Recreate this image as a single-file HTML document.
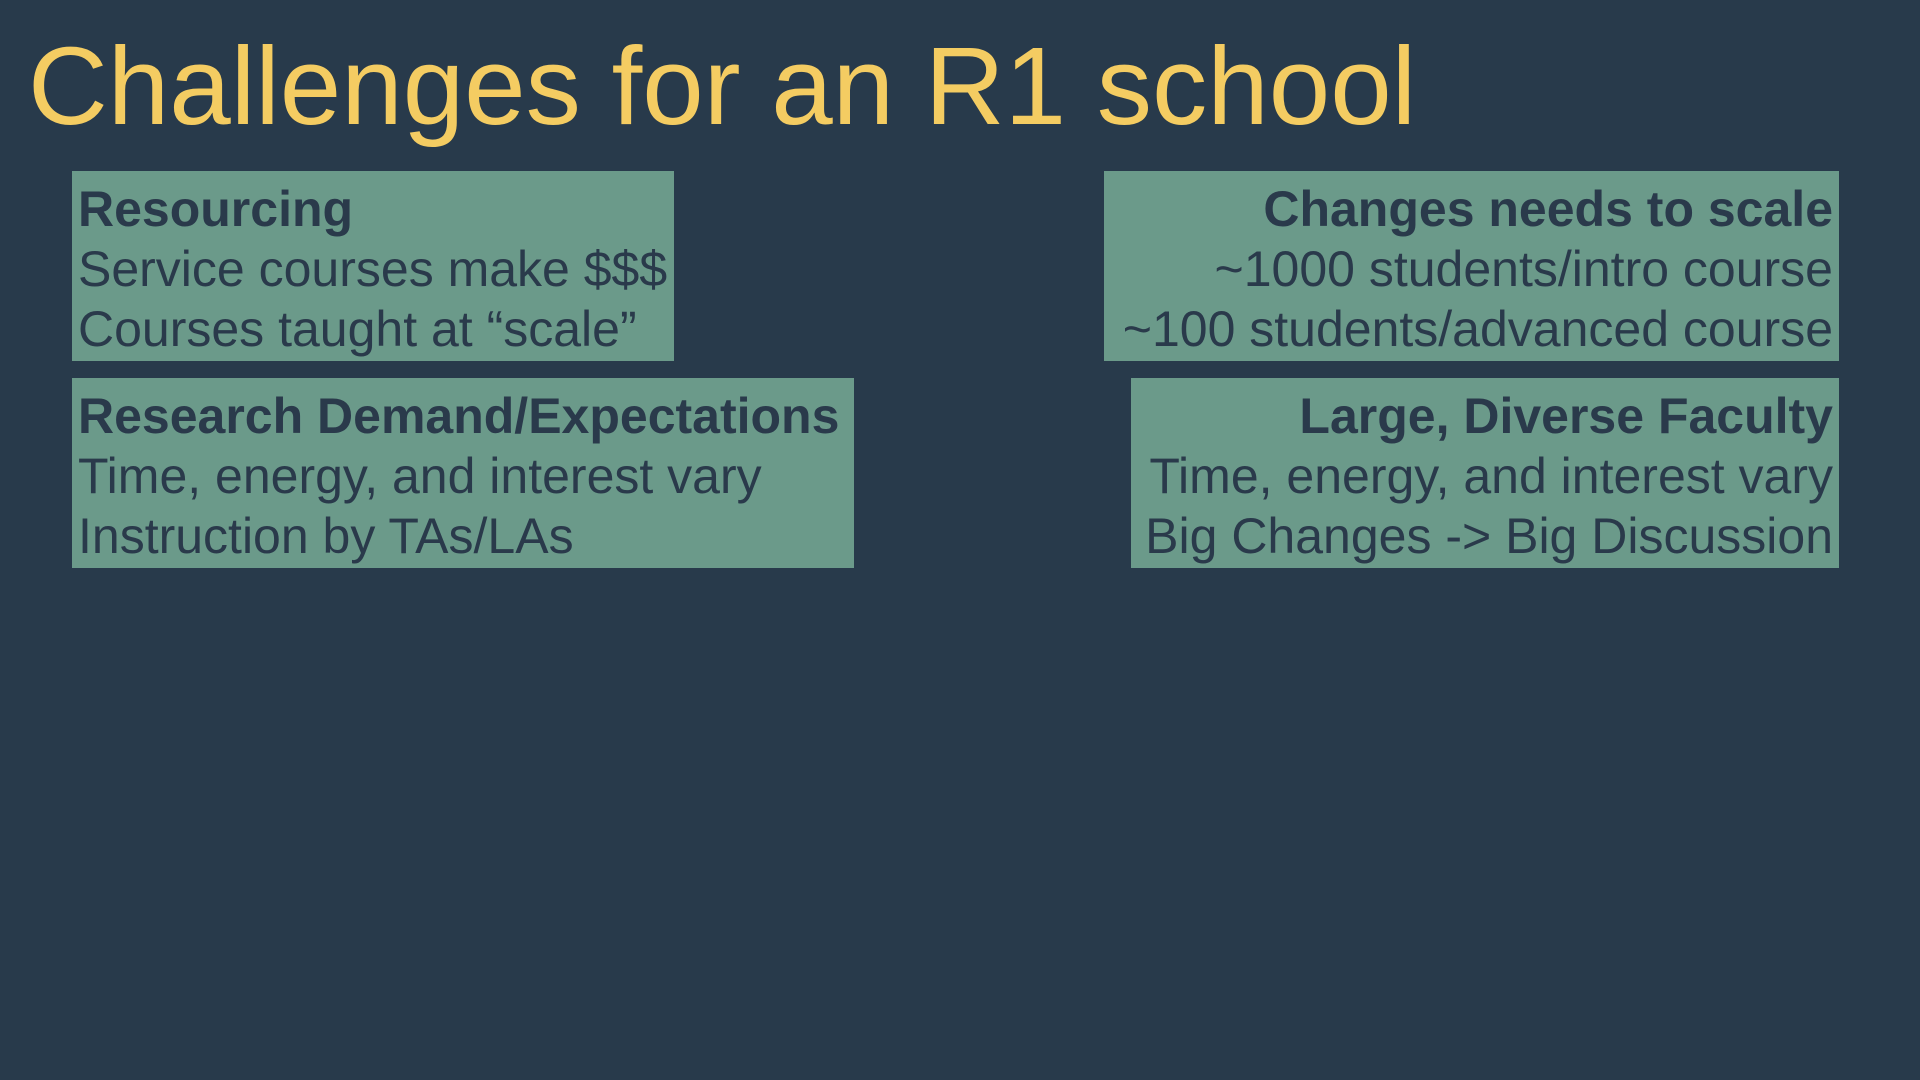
<!DOCTYPE html>
<html><head><meta charset="utf-8"><style>
html,body{margin:0;padding:0}
body{width:1920px;height:1080px;background:#283a4b;position:relative;overflow:hidden;font-family:"Liberation Sans",sans-serif}
h1{position:absolute;left:28px;top:22px;margin:0;font-weight:normal;font-size:110.5px;color:#f4cc62;line-height:130px}
.box{position:absolute;background:#6b9a8a;color:#2a3a4b;font-size:50px;line-height:60px;box-sizing:border-box;padding:8px 6px 0 6px;white-space:nowrap;overflow:hidden}
.box b{font-weight:bold}
.r{text-align:right}
</style></head><body>
<h1>Challenges for an R1 school</h1>
<div class="box" style="left:72px;top:171px;width:602px;height:190px"><b>Resourcing</b><br>Service courses make $$$<br>Courses taught at “scale”</div>
<div class="box" style="left:72px;top:378px;width:782px;height:190px"><b>Research Demand/Expectations</b><br>Time, energy, and interest vary<br>Instruction by TAs/LAs</div>
<div class="box r" style="left:1104px;top:171px;width:735px;height:190px"><b>Changes needs to scale</b><br>~1000 students/intro course<br>~100 students/advanced course</div>
<div class="box r" style="left:1131px;top:378px;width:708px;height:190px"><b>Large, Diverse Faculty</b><br>Time, energy, and interest vary<br>Big Changes -&gt; Big Discussion</div>
</body></html>
